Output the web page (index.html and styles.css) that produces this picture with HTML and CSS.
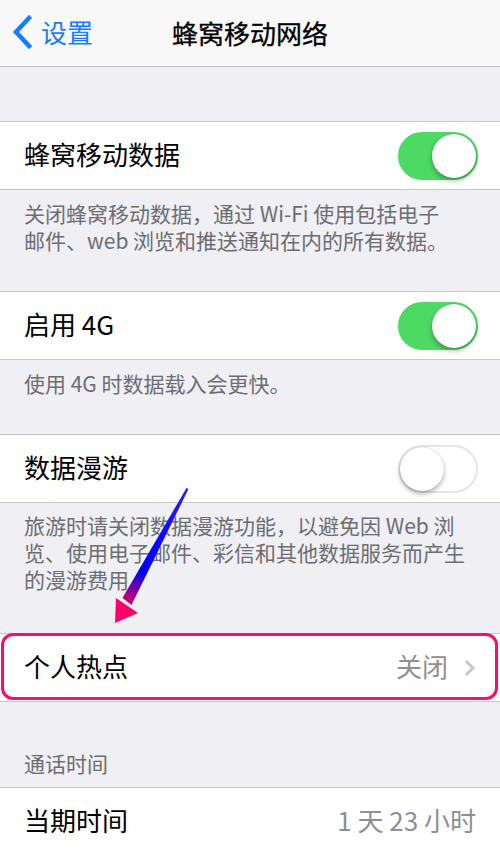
FILE: index.html
```html
<!DOCTYPE html>
<html lang="zh-CN">
<head>
  <meta charset="utf-8" />
  <meta name="viewport" content="width=device-width, initial-scale=1" />
  <title>蜂窝移动网络</title>
  <link rel="stylesheet" href="styles.css">
</head>
<body>
  <div class="screen">
    <header class="nav">
      <a class="nav-back" href="#">
        <svg class="back-chevron" width="22" height="34" viewBox="0 0 22 34">
          <polyline points="18,3 5,17 18,31" fill="none" stroke="#147efb" stroke-width="4.5" stroke-linecap="square" />
        </svg>
        <span>设置</span>
      </a>
      <h1 class="nav-title">蜂窝移动网络</h1>
    </header>

    <div class="group first">
      <div class="cell">
        <span class="cell-label">蜂窝移动数据</span>
        <span class="switch on"><span class="knob"></span></span>
      </div>
    </div>
    <p class="group-footer narrow">关闭蜂窝移动数据，通过 Wi-Fi 使用包括电子邮件、web 浏览和推送通知在内的所有数据。</p>

    <div class="group">
      <div class="cell">
        <span class="cell-label">启用 4G</span>
        <span class="switch on"><span class="knob"></span></span>
      </div>
    </div>
    <p class="group-footer">使用 4G 时数据载入会更快。</p>

    <div class="group">
      <div class="cell">
        <span class="cell-label">数据漫游</span>
        <span class="switch"><span class="knob"></span></span>
      </div>
    </div>
    <p class="group-footer last">旅游时请关闭数据漫游功能，以避免因 Web 浏览、使用电子邮件、彩信和其他数据服务而产生的漫游费用。</p>

    <div class="group highlight">
      <div class="cell">
        <span class="cell-label">个人热点</span>
        <span class="cell-value">关闭</span>
        <svg class="disclosure" width="12" height="18" viewBox="0 0 12 18">
          <polyline points="2,2 9,9 2,16" fill="none" stroke="#c7c7cc" stroke-width="3" />
        </svg>
      </div>
    </div>

    <h2 class="group-header">通话时间</h2>
    <div class="group open-bottom">
      <div class="cell">
        <span class="cell-label">当期时间</span>
        <span class="cell-value plain">1 天 23 小时</span>
      </div>
    </div>

    <!-- pointer arrow drawn over the list -->
    <svg class="pointer" width="500" height="854" viewBox="0 0 500 854">
      <defs>
        <linearGradient id="arrowFill" x1="187" y1="488" x2="115" y2="623" gradientUnits="userSpaceOnUse">
          <stop offset="0" stop-color="#2a1cff" />
          <stop offset="0.62" stop-color="#0000f0" />
          <stop offset="0.82" stop-color="#c0007a" />
          <stop offset="1" stop-color="#ff0066" />
        </linearGradient>
      </defs>
      <polygon points="186.5,488 188.5,489 131.5,605 122.5,598" fill="url(#arrowFill)" />
      <polygon points="116,598 138,613 115,623" fill="#ff0066" />
    </svg>
  </div>
</body>
</html>
```

FILE: styles.css
```css
body {
  margin: 0;
  padding: 0;
  background-color: #efeff4;
  font-family: "Noto Sans CJK SC", "Noto Sans", sans-serif;
  color: #000;
}

.screen {
  position: relative;
  width: 500px;
  height: 854px;
  overflow: hidden;
}

.nav {
  height: 66px;
  background-color: #f8f8f8;
  border-bottom: 1px solid #c4c4c8;
  display: flex;
  align-items: center;
  justify-content: center;
  position: relative;
}

.nav-back {
  position: absolute;
  left: 11px;
  top: 15px;
  display: flex;
  align-items: center;
  gap: 8px;
  color: #147efb;
  text-decoration: none;
  font-size: 26px;
  line-height: 34px;
}

.nav-title {
  margin: 0;
  font-size: 26px;
  font-weight: 400;
  line-height: 34px;
  -webkit-text-stroke: 0.3px #000;
}

.group {
  background-color: #fff;
  border-top: 1px solid #c8c7cc;
  border-bottom: 1px solid #c8c7cc;
}

.group.first {
  margin-top: 54px;
}

.group.open-bottom {
  border-bottom: none;
}

.cell {
  height: 67px;
  padding: 0 24px;
  display: flex;
  align-items: center;
  font-size: 26px;
}

.open-bottom .cell {
  border-bottom: 1px solid #c8c7cc;
  margin-left: 24px;
  padding-left: 0;
}

.cell-label {
  flex: 1;
  margin-bottom: 4px;
}

.cell-value {
  color: #8e8e93;
  margin-right: 16px;
  margin-bottom: 4px;
}

.cell-value.plain {
  margin-right: 0;
}

.disclosure {
  margin-top: 1px;
}

.switch {
  position: relative;
  width: 76px;
  height: 44px;
  border-radius: 24px;
  border: 2px solid #e5e5e5;
  background-color: #fff;
  margin-right: -2px;
}

.switch .knob {
  position: absolute;
  left: 0;
  top: 0;
  width: 44px;
  height: 44px;
  border-radius: 50%;
  background-color: #fff;
  box-shadow: 0 3px 5px rgba(0, 0, 0, 0.28), 0 0 1px rgba(0, 0, 0, 0.3);
}

.switch.on {
  background-color: #4cd964;
  border-color: #4cd964;
}

.switch.on .knob {
  left: 32px;
}

.group-footer {
  margin: 0;
  padding: 10px 24px 37px;
  font-size: 21px;
  line-height: 27px;
  color: #6d6d72;
}

.group-footer.narrow {
  padding-right: 44px;
}

.group-footer.last {
  padding-top: 9px;
  padding-bottom: 40px;
}

.highlight {
  position: relative;
}

.highlight::after {
  content: "";
  position: absolute;
  left: 1px;
  right: 2px;
  top: -1px;
  bottom: 1px;
  border: 3px solid #ff0a6a;
  border-radius: 12px;
}

.group-header {
  margin: 0;
  padding: 48px 24px 10px;
  font-size: 21px;
  font-weight: 400;
  line-height: 27px;
  color: #6d6d72;
}

.pointer {
  position: absolute;
  left: 0;
  top: 0;
  pointer-events: none;
}
```
